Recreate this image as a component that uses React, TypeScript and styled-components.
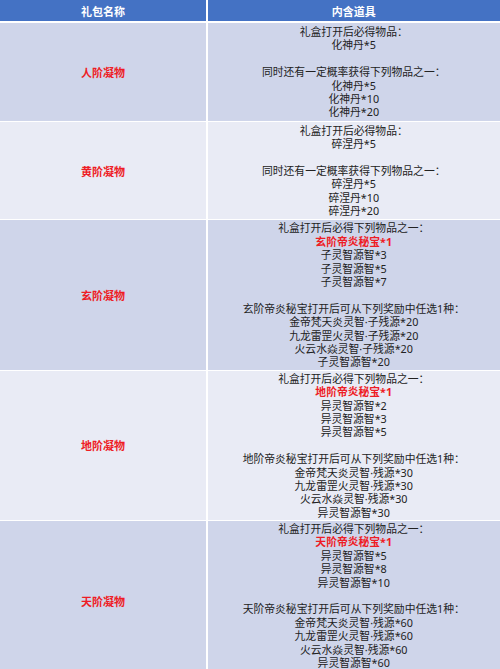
import React from "react"
import styled, { createGlobalStyle } from "styled-components"

const GlobalStyle = createGlobalStyle`
  html, body {
    margin: 0;
    padding: 0;
    background: #ffffff;
  }
  body {
    font-family: "Noto Sans", "Noto Sans CJK SC", sans-serif;
  }
`

const Table = styled.div`
  width: 500px;
  display: flex;
  flex-direction: column;
  gap: 1px;
  background: #ffffff;
`

const HeaderRow = styled.div`
  display: grid;
  grid-template-columns: 206px 1fr;
  column-gap: 1.5px;
  margin-bottom: 1px;
`

const HeadCell = styled.div`
  height: 21px;
  background: #4472c4;
  color: #ffffff;
  font-size: 11px;
  font-weight: 700;
  display: flex;
  align-items: center;
  justify-content: center;
`

const BodyRow = styled.div`
  display: grid;
  grid-template-columns: 206px 1fr;
  column-gap: 1.5px;
`

const NameCell = styled.div<{ $alt: boolean }>`
  background: ${(p) => (p.$alt ? "#e9ebf5" : "#cfd5ea")};
  color: #ee1c25;
  font-size: 11px;
  font-weight: 700;
  display: flex;
  align-items: center;
  justify-content: center;
`

const ItemsCell = styled.div<{ $alt: boolean; $short?: boolean; $last?: boolean }>`
  background: ${(p) => (p.$alt ? "#e9ebf5" : "#cfd5ea")};
  padding: ${(p) => (p.$short ? "2px" : "1px")} 0 ${(p) => (p.$last ? "12px" : p.$short ? "2px" : "1px")};
  display: flex;
  flex-direction: column;
  align-items: center;
`

const Line = styled.div<{ $hl?: boolean }>`
  font-size: 10.8px;
  line-height: 13.4px;
  height: 13.4px;
  white-space: nowrap;
  color: ${(p) => (p.$hl ? "#ee1c25" : "#222222")};
  font-weight: ${(p) => (p.$hl ? 700 : 400)};
`

type Entry = { text: string; hl?: boolean }

const t = (text: string, hl = false): Entry => ({ text, hl })

const rows: { name: string; lines: Entry[] }[] = [
  {
    name: "人阶凝物",
    lines: [
      t("礼盒打开后必得物品："),
      t("化神丹*5"),
      t(""),
      t("同时还有一定概率获得下列物品之一："),
      t("化神丹*5"),
      t("化神丹*10"),
      t("化神丹*20"),
    ],
  },
  {
    name: "黄阶凝物",
    lines: [
      t("礼盒打开后必得物品："),
      t("碎涅丹*5"),
      t(""),
      t("同时还有一定概率获得下列物品之一："),
      t("碎涅丹*5"),
      t("碎涅丹*10"),
      t("碎涅丹*20"),
    ],
  },
  {
    name: "玄阶凝物",
    lines: [
      t("礼盒打开后必得下列物品之一："),
      t("玄阶帝炎秘宝*1", true),
      t("子灵智源智*3"),
      t("子灵智源智*5"),
      t("子灵智源智*7"),
      t(""),
      t("玄阶帝炎秘宝打开后可从下列奖励中任选1种："),
      t("金帝梵天炎灵智·子残源*20"),
      t("九龙雷罡火灵智·子残源*20"),
      t("火云水焱灵智·子残源*20"),
      t("子灵智源智*20"),
    ],
  },
  {
    name: "地阶凝物",
    lines: [
      t("礼盒打开后必得下列物品之一："),
      t("地阶帝炎秘宝*1", true),
      t("异灵智源智*2"),
      t("异灵智源智*3"),
      t("异灵智源智*5"),
      t(""),
      t("地阶帝炎秘宝打开后可从下列奖励中任选1种："),
      t("金帝梵天炎灵智·残源*30"),
      t("九龙雷罡火灵智·残源*30"),
      t("火云水焱灵智·残源*30"),
      t("异灵智源智*30"),
    ],
  },
  {
    name: "天阶凝物",
    lines: [
      t("礼盒打开后必得下列物品之一："),
      t("天阶帝炎秘宝*1", true),
      t("异灵智源智*5"),
      t("异灵智源智*8"),
      t("异灵智源智*10"),
      t(""),
      t("天阶帝炎秘宝打开后可从下列奖励中任选1种："),
      t("金帝梵天炎灵智·残源*60"),
      t("九龙雷罡火灵智·残源*60"),
      t("火云水焱灵智·残源*60"),
      t("异灵智源智*60"),
    ],
  },
]

export default function App() {
  return (
    <>
      <GlobalStyle />
      <Table>
        <HeaderRow>
          <HeadCell>礼包名称</HeadCell>
          <HeadCell>内含道具</HeadCell>
        </HeaderRow>
        {rows.map((row, i) => (
          <BodyRow key={row.name}>
            <NameCell $alt={i % 2 === 1}>{row.name}</NameCell>
            <ItemsCell
              $alt={i % 2 === 1}
              $short={row.lines.length < 10}
              $last={i === rows.length - 1}
            >
              {row.lines.map((l, j) => (
                <Line key={j} $hl={l.hl}>
                  {l.text || "\u00a0"}
                </Line>
              ))}
            </ItemsCell>
          </BodyRow>
        ))}
      </Table>
    </>
  )
}
